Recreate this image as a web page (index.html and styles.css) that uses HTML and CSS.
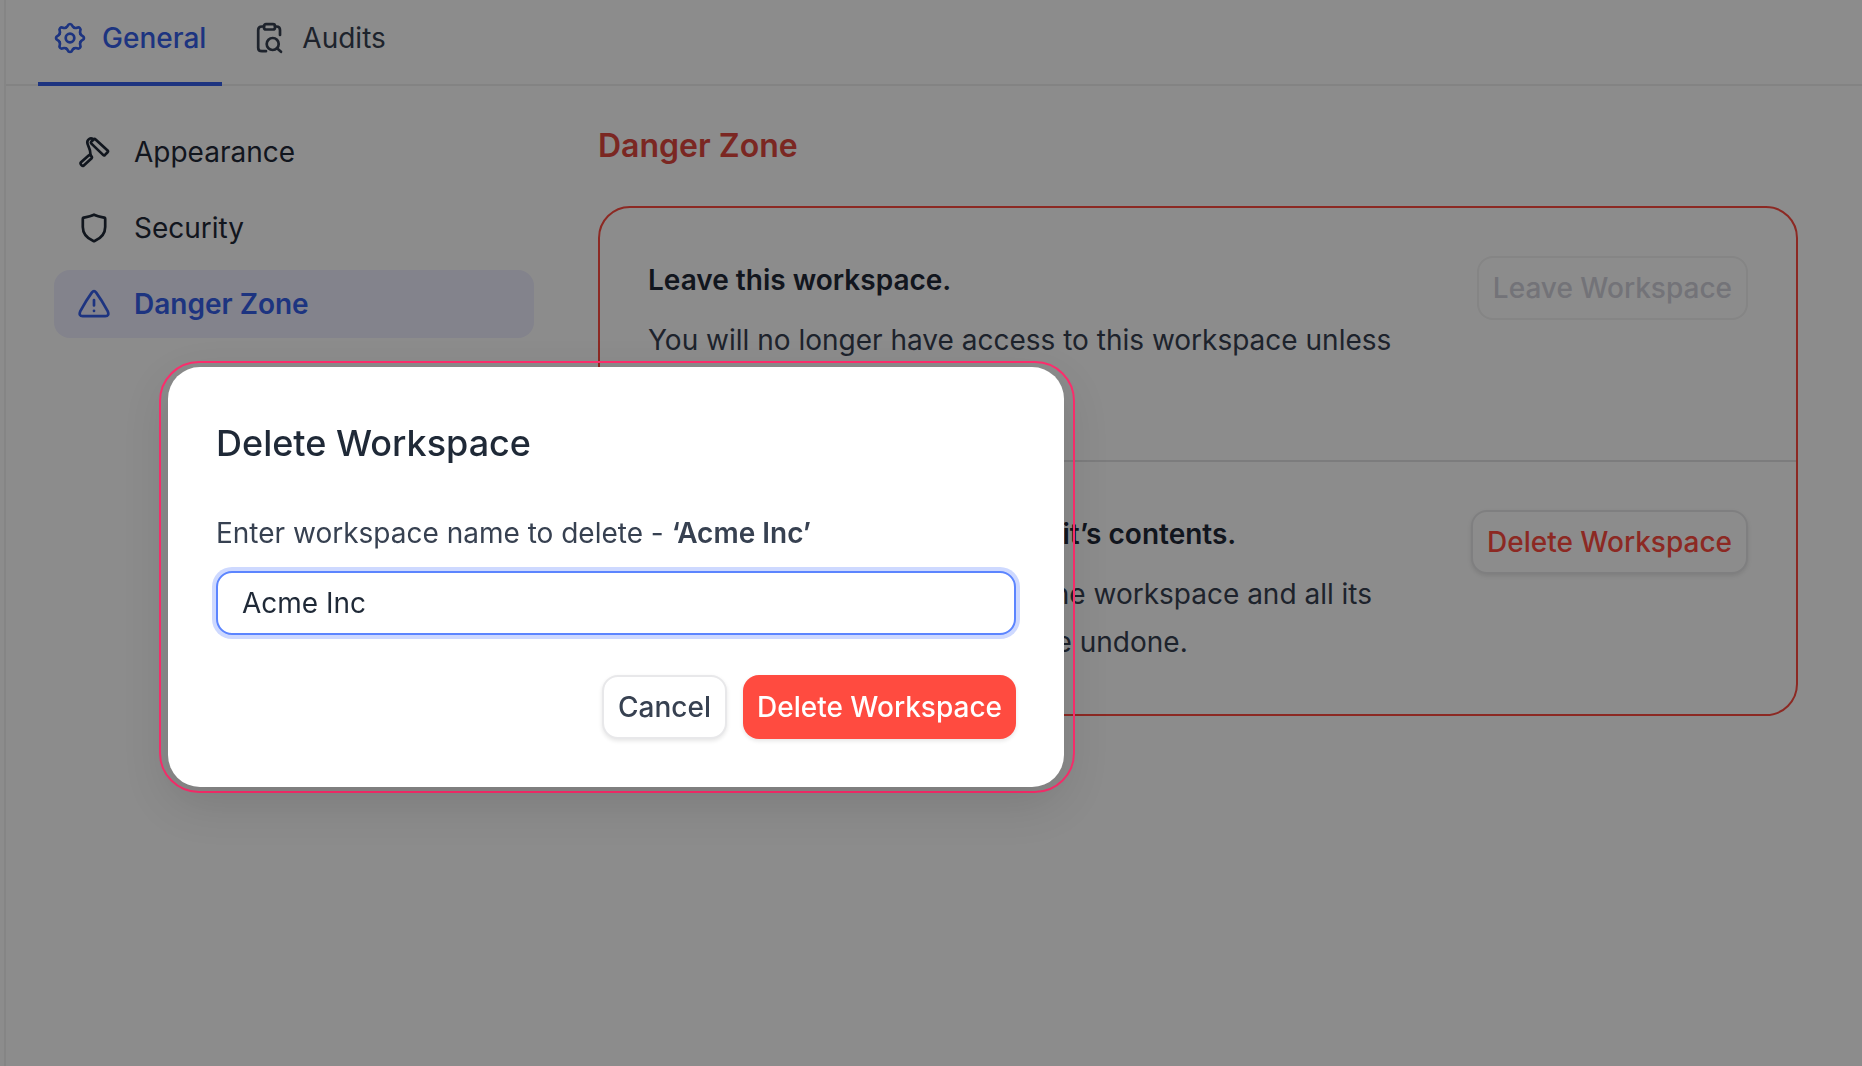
FILE: index.html
```
<!DOCTYPE html>
<html lang="en">
<head>
    <meta charset="UTF-8">
    <meta name="viewport" content="width=device-width, initial-scale=1.0">
    <title>Workspace Settings</title>
    <link rel="stylesheet" href="styles.css">
</head>
<body>
    <div class="page">
        <!-- Top tabs -->
        <nav class="tabs">
            <a class="tab active" href="#general">
                <svg class="icon" viewBox="0 0 32 32">
                    <defs>
                        <path id="tooth" d="M-4.3-10.3C-3.2-10.8-2.7-11.2-2.3-12.2C-1.8-13.5-1.1-14 0-14C1.1-14 1.8-13.5 2.3-12.2C2.7-11.2 3.2-10.8 4.3-10.3"/>
                    </defs>
                    <g transform="translate(16 16)">
                        <use href="#tooth"/>
                        <use href="#tooth" transform="rotate(45)"/>
                        <use href="#tooth" transform="rotate(90)"/>
                        <use href="#tooth" transform="rotate(135)"/>
                        <use href="#tooth" transform="rotate(180)"/>
                        <use href="#tooth" transform="rotate(225)"/>
                        <use href="#tooth" transform="rotate(270)"/>
                        <use href="#tooth" transform="rotate(315)"/>
                        <circle r="4.3"/>
                    </g>
                </svg>
                General
            </a>
            <a class="tab" href="#audits">
                <svg class="icon" viewBox="0 0 32 32">
                    <path d="M10 4.5H8C5.6 4.5 4.2 5.8 4.2 8V26C4.2 28.4 5.5 29.2 8 29.2H12"/>
                    <path d="M21 4.5H22.5C24.8 4.5 26 5.8 26 8V13"/>
                    <rect x="10" y="2.2" width="11" height="5.3" rx="2"/>
                    <circle cx="18.7" cy="22" r="6"/>
                    <path d="M23 26.3L27 29.8"/>
                </svg>
                Audits
            </a>
        </nav>

        <div class="content">
            <!-- Settings menu -->
            <nav class="menu">
                <a class="menu-item" href="#appearance">
                    <svg class="icon" viewBox="0 0 32 32">
                        <path d="M17.6 3.4L29.6 14.4Q30.4 15.3 29.6 16.2L27 18.9Q26 19.8 25.1 18.9L13.4 7.6Q12.5 6.6 13.4 5.6L15.7 3.4Q16.6 2.5 17.6 3.4Z"/>
                        <path d="M15.2 3.2C13.5 2 11.6 2.3 10.2 3.8C8.6 5.6 9.3 8 10.5 10.3C11.7 12.7 12.6 15.5 12.6 19.4"/>
                        <path d="M10.6 19.6L3 26.3C1.7 27.6 3.8 30.6 5.5 29.7L13.4 22.6C14.2 21.7 14 20.5 12.8 19.4C12 18.8 11.2 19 10.6 19.6Z"/>
                    </svg>
                    Appearance
                </a>
                <a class="menu-item" href="#security">
                    <svg class="icon" viewBox="0 0 32 32">
                        <path d="M16 2.7C19.4 4.4 23 5 26.4 5.6Q27.2 5.8 27.2 6.7V15C27.2 22 22 26.7 16.6 29.1Q16 29.4 15.4 29.1C10 26.7 4.8 22 4.8 15V6.7Q4.8 5.8 5.6 5.6C9 5 12.6 4.4 16 2.7Z"/>
                    </svg>
                    Security
                </a>
                <a class="menu-item active" href="#danger-zone">
                    <svg class="icon" viewBox="0 0 32 32">
                        <path d="M13.8 4.6Q16 1.8 18.2 4.6Q24 12.5 29.8 23.4Q31.6 27.9 27.2 28.2H4.8Q.4 27.9 2.2 23.4Q8 12.5 13.8 4.6Z"/>
                        <path d="M16 12V17.5M16 22.8V23"/>
                    </svg>
                    Danger Zone
                </a>
            </nav>

            <main class="main">
                <h1 class="heading">Danger Zone</h1>
                <div class="card">
                    <section class="row">
                        <div class="row-text">
                            <h2>Leave this workspace.</h2>
                            <p>You will no longer have access to this workspace unless you are invited back.</p>
                        </div>
                        <button class="btn" type="button" disabled>Leave Workspace</button>
                    </section>
                    <section class="row">
                        <div class="row-text">
                            <h2>Delete your workspace and all it’s contents.</h2>
                            <p>This will permanently remove the workspace and all its contents. This action can not be undone.</p>
                        </div>
                        <button class="btn btn-outline-danger" type="button">Delete Workspace</button>
                    </section>
                </div>
            </main>
        </div>
    </div>

    <div class="overlay"></div>

    <!-- Delete dialog -->
    <div class="modal-ring">
        <form class="modal" role="dialog" aria-labelledby="modal-title">
            <h2 class="modal-title" id="modal-title">Delete Workspace</h2>
            <label class="modal-label" for="workspace-name">Enter workspace name to delete - <strong>‘Acme Inc’</strong></label>
            <input class="modal-input" type="text" id="workspace-name" name="workspace-name" value="Acme Inc">
            <div class="modal-actions">
                <button class="btn" type="button">Cancel</button>
                <button class="btn btn-danger" type="submit">Delete Workspace</button>
            </div>
        </form>
    </div>
</body>
</html>
```
FILE: styles.css
```
* {
    box-sizing: border-box;
}
body {
    font-family: Inter, "Liberation Sans", sans-serif;
    font-size: 28px;
    line-height: 48px;
    margin: 0;
    color: #1f2937;
    background: #ffffff;
}
h1, h2, p {
    margin: 0;
}
a {
    color: inherit;
    text-decoration: none;
}
.page {
    min-height: 100vh;
    margin-left: 4px;
    border-left: 2px solid #f2f2f2;
}
.icon {
    width: 32px;
    height: 32px;
    flex-shrink: 0;
    fill: none;
    stroke: currentColor;
    stroke-width: 2.7;
    stroke-linecap: round;
    stroke-linejoin: round;
}

/* Tabs */
.tabs {
    display: flex;
    gap: 16px;
    padding: 0 32px;
    height: 86px;
    border-bottom: 2px solid #eeeeee;
}
.tab {
    display: flex;
    align-items: center;
    gap: 16px;
    height: 86px;
    padding: 0 16px 6px;
    border-bottom: 4px solid transparent;
    color: #374151;
}
.tab.active {
    color: #3660ea;
    border-bottom-color: #3660ea;
    border-radius: 4px 4px 0 0;
    font-weight: 500;
}

/* Content */
.content {
    display: flex;
    gap: 64px;
    padding: 32px 64px 64px 48px;
}
.menu {
    display: flex;
    flex-direction: column;
    gap: 8px;
    width: 480px;
    flex-shrink: 0;
}
.menu-item {
    display: flex;
    align-items: center;
    gap: 24px;
    height: 68px;
    padding: 0 24px;
    border-radius: 16px;
}
.menu-item.active {
    color: #3660ea;
    background: #eeeeff;
    font-weight: 600;
}
.main {
    flex: 1;
}
.heading {
    margin: 4px 0 36px;
    font-size: 32px;
    font-weight: 600;
    color: #e0483e;
}
.card {
    border: 2px solid #ff4b40;
    border-radius: 32px;
}
.row {
    display: flex;
    justify-content: space-between;
    align-items: flex-start;
    gap: 48px;
    padding: 48px;
}
.row + .row {
    border-top: 2px solid #e2e2e4;
}
.row-text {
    max-width: 780px;
}
.row-text h2 {
    font-size: 28px;
    font-weight: 600;
}
.row-text p {
    margin-top: 12px;
    color: #374151;
}

/* Buttons */
.btn {
    height: 64px;
    padding: 0 14px;
    border: 2px solid #e8e8ea;
    border-radius: 16px;
    background: #ffffff;
    box-shadow: 0 2px 4px rgba(0, 0, 0, 0.1);
    color: #374151;
    font-family: inherit;
    font-size: 28px;
    font-weight: 500;
    white-space: nowrap;
    cursor: pointer;
}
.btn:disabled {
    color: #d1d1db;
    border-color: #f2f2f2;
    box-shadow: none;
    cursor: default;
}
.btn-outline-danger {
    color: #ff4b40;
}
.btn-danger {
    border: none;
    color: #ffffff;
    background: #ff4b40;
}

/* Dialog */
.overlay {
    position: fixed;
    inset: 0;
    background: rgba(0, 0, 0, 0.45);
}
.modal-ring {
    position: absolute;
    top: 361px;
    left: 159px;
    padding: 4px 9px 4px 7px;
    border: 2px solid #ff2e6e;
    border-radius: 40px;
}
.modal {
    display: flex;
    flex-direction: column;
    width: 896px;
    padding: 48px;
    border-radius: 32px;
    background: #ffffff;
    box-shadow: 0 16px 48px rgba(0, 0, 0, 0.12);
}
.modal-title {
    margin-bottom: 40px;
    font-size: 36px;
    font-weight: 500;
    line-height: 56px;
}
.modal-label {
    margin-bottom: 16px;
    line-height: 44px;
    color: #374151;
}
.modal-label strong {
    font-weight: 600;
}
.modal-input {
    height: 64px;
    padding: 0 24px;
    border: 2px solid #5c85ff;
    border-radius: 16px;
    outline: none;
    box-shadow: 0 0 0 4px #ced9ff;
    color: #1f2937;
    font-family: inherit;
    font-size: 28px;
}
.modal-actions {
    display: flex;
    justify-content: flex-end;
    gap: 16px;
    margin-top: 40px;
}
```
